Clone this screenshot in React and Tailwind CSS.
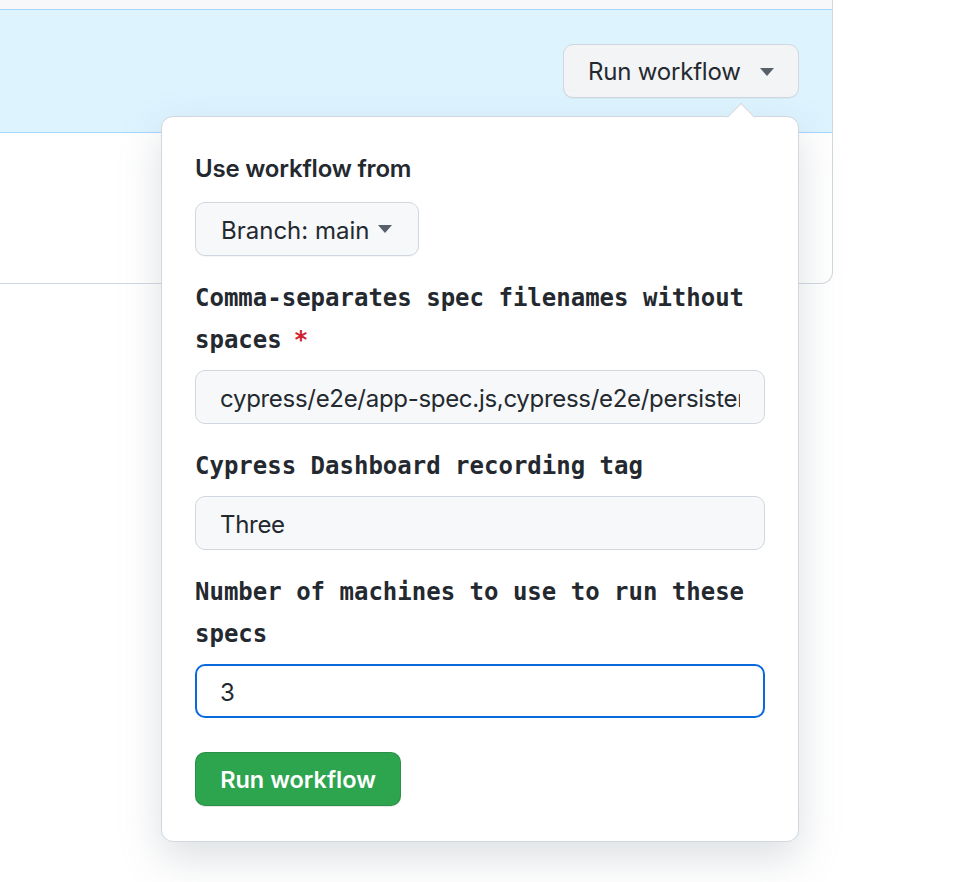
import React from "react";

const Caret = ({ className = "" }) => (
  <svg width="14" height="8" viewBox="0 0 14 8" className={"shrink-0 " + className}>
    <path d="M0 0 L14 0 L7 8 Z" fill="#57606a" />
  </svg>
);

const fields = [
  {
    label: "Comma-separates spec filenames without spaces",
    required: true,
    value: "cypress/e2e/app-spec.js,cypress/e2e/persistence-spec.js",
  },
  { label: "Cypress Dashboard recording tag", value: "Three" },
  { label: "Number of machines to use to run these specs", value: "3", focused: true },
];

const Field = ({ label, required, value, focused }) => (
  <div className="mt-[21px]">
    <label className="block font-['DejaVu_Sans_Mono',monospace] font-bold text-[24px] leading-[42px] text-[#24292f]">
      {label}
      {required && <span className="text-[#cf222e] ml-[12px]">*</span>}
    </label>
    <input
      readOnly
      value={value}
      className={
        focused
          ? "mt-[9px] block w-full h-[54px] rounded-[10px] border-2 border-[#0969da] bg-white pl-[23px] pr-[24px] pt-[2px] text-[24px] tracking-[-0.3px] text-[#24292f] outline-none"
          : "mt-[9px] block w-full h-[54px] rounded-[10px] border border-[#d0d7de] bg-[#f6f8fa] pl-[24px] pr-[24px] pt-[2px] text-[24px] tracking-[-0.3px] text-[#24292f] outline-none"
      }
    />
  </div>
);

export default function App() {
  return (
    <div className="w-[954px] h-[882px] bg-white overflow-hidden font-['Inter',sans-serif] text-[#24292f]">
      <div className="w-[833px] h-[284px] border-r border-b border-[#d0d7de] rounded-br-[12px]">
        <div className="h-[9px] bg-[#f6f8fa]" />
        <div className="h-[124px] bg-[#ddf4ff] border-y border-[#a5d6ff] flex justify-end pt-[34px] pr-[33px]">
          <div className="relative h-fit">
            <button className="h-[54px] w-[236px] flex items-center justify-between whitespace-nowrap pl-[24px] pr-[24px] pt-[2px] rounded-[10px] border border-[#d0d7de] bg-[#f3f4f6] shadow-[0_1px_0_rgba(27,31,36,0.04)] text-[24px] tracking-[-0.2px] text-[#24292f]">
              <span>Run workflow</span>
              <Caret />
            </button>

            <div className="absolute right-0 top-[72px] w-[638px] z-10 rounded-[12px] border border-[#d0d7de] bg-white shadow-[0_16px_40px_rgba(140,149,159,0.3)] pl-[33px] pr-[33px] pt-[31px] pb-[35px]">
              <div className="absolute -top-[10px] right-[47px] w-[20px] h-[20px] rotate-45 bg-white border-l border-t border-[#d0d7de]" />
              <div className="relative">
                <div className="text-[24px] leading-[42px] font-semibold tracking-[-0.2px]">Use workflow from</div>
                <button className="mt-[12px] h-[54px] flex items-center gap-[9px] whitespace-nowrap pl-[25px] pr-[26px] pt-[3px] rounded-[10px] border border-[#d0d7de] bg-[#f6f8fa] shadow-[0_1px_0_rgba(27,31,36,0.04)] text-[24px]">
                  <span>Branch: main</span>
                  <Caret className="-mt-[3px]" />
                </button>

                {fields.map((f) => (
                  <Field key={f.label} {...f} />
                ))}

                <button className="mt-[34px] h-[54px] w-[206px] pt-[2px] rounded-[10px] border border-[rgba(27,31,36,0.15)] bg-[#2da44e] text-white text-[23.5px] font-semibold shadow-[0_1px_0_rgba(27,31,36,0.1)]">
                  Run workflow
                </button>
              </div>
            </div>
          </div>
        </div>
      </div>
    </div>
  );
}
